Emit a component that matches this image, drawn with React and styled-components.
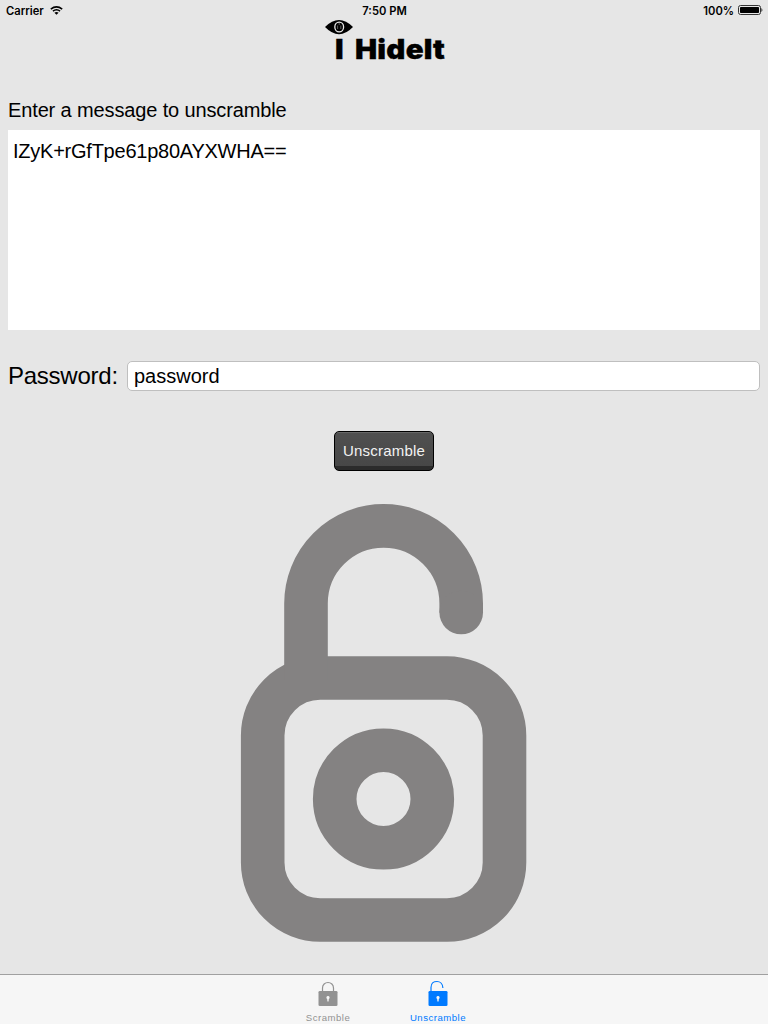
import React from "react";
import styled, { createGlobalStyle } from "styled-components";

const GlobalStyle = createGlobalStyle`
  * { box-sizing: border-box; }
  body { margin: 0; background: #e6e6e6; }
`;

const Screen = styled.div`
  width: 768px;
  height: 1024px;
  display: flex;
  flex-direction: column;
  overflow: hidden;
  background: #e6e6e6;
  color: #000;
  font-family: "Liberation Sans", Arial, sans-serif;
`;

const StatusBar = styled.header`
  display: grid;
  grid-template-columns: 1fr auto 1fr;
  height: 20px;
  padding: 1px 5px 0 6px;
  align-items: center;
  font: 600 11.2px/20px Inter, sans-serif;
`;

const StatusGroup = styled.div`
  display: flex;
  align-items: center;
  gap: ${(p) => p.$gap};
  justify-content: ${(p) => p.$align || "flex-start"};

  svg {
    margin-bottom: 2px;
  }
`;

const Brand = styled.div`
  display: flex;
  flex-direction: column;
  width: 122px;
  height: 44px;
  margin-left: 325px;
`;

const EyeIcon = styled.svg`
  display: block;
  width: 28px;
  height: 15px;
`;

const BrandName = styled.div`
  display: flex;
  gap: 10px;
  margin-left: 10.2px;
  font: 900 26.5px/29px Inter, sans-serif;
  letter-spacing: 0.2px;
  -webkit-text-stroke: 0.3px #000;
  white-space: nowrap;
  transform: scaleX(1.115);
  transform-origin: left;
`;

const Content = styled.main`
  flex: 1;
  display: flex;
  flex-direction: column;
  padding: 35px 8px 0;
`;

const Prompt = styled.label`
  height: 31px;
  font-size: 20px;
  line-height: 22px;
  letter-spacing: -0.13px;
`;

const MessageBox = styled.div`
  height: 200px;
  padding: 10px 5px;
  background: #fff;
  font-size: 20px;
  line-height: 23px;
  letter-spacing: -0.24px;
`;

const PasswordRow = styled.div`
  display: flex;
  align-items: center;
  height: 30px;
  margin-top: 31px;
`;

const PasswordLabel = styled.label`
  width: 119px;
  font-size: 24px;
  letter-spacing: -0.25px;
`;

const PasswordField = styled.div`
  flex: 1;
  height: 30px;
  padding: 0 6px;
  border: 1px solid #bfbfbf;
  border-radius: 5px;
  background: #fff;
  font-size: 20px;
  line-height: 29px;
`;

const ActionButton = styled.button`
  align-self: center;
  width: 100px;
  height: 40px;
  margin-top: 40px;
  padding: 0;
  border: 1px solid #000;
  border-radius: 5px;
  background: linear-gradient(#686868 0 1px, #505050 1px, #474747 34px, #2b2b2b 34px);
  color: #f2f2f2;
  font: 15px/38px "Liberation Sans", Arial, sans-serif;
  letter-spacing: 0.2px;
`;

const LockArt = styled.svg`
  display: block;
  align-self: center;
  width: 288px;
  height: 440px;
  margin-top: 32px;
`;

const TabBar = styled.nav`
  display: flex;
  justify-content: center;
  height: 50px;
  padding-right: 2px;
  border-top: 1px solid #a0a0a0;
  background: #f6f6f6;
`;

const Tab = styled.div`
  display: flex;
  flex-direction: column;
  align-items: center;
  width: 110px;
  padding-top: 5px;
  color: ${(p) => (p.$active ? "#007aff" : "#929292")};
  font-size: 9.6px;
  line-height: 12px;
  letter-spacing: 0.5px;
`;

const TabIcon = styled.svg`
  display: block;
  width: 22px;
  height: 28px;
  margin-bottom: 4px;
`;

const WifiIcon = () => (
  <svg width="13" height="9" viewBox="0 0 13 9" fill="none" stroke="#000">
    <path d="M.8 3.1Q6.5-1.3 12.2 3.1" strokeWidth="1.6" />
    <path d="M2.9 5.2Q6.5 2.5 10.1 5.2" strokeWidth="1.5" />
    <path d="M4.4 6.7Q6.5 5.3 8.6 6.7L6.5 8.8Z" fill="#000" stroke="none" />
  </svg>
);

const BatteryIcon = () => (
  <svg width="25" height="10" viewBox="0 0 25 10">
    <rect x=".5" y=".5" width="22" height="9" rx="2" fill="none" stroke="#333" />
    <rect x="2" y="2" width="19" height="6" rx=".8" />
    <path d="M23.5 3Q25.2 5 23.5 7Z" />
  </svg>
);

const PadlockTabIcon = ({ open }) => (
  <TabIcon viewBox="0 0 22 28">
    <path
      d={open ? "M4 11V7.5C4 3 7 1.5 10 1.5C13 1.5 15.7 3.8 15.9 8" : "M5.5 12V8C5.5 4.8 8 2.5 11 2.5S16.5 4.8 16.5 8V12"}
      fill="none"
      stroke="currentColor"
      strokeWidth="1.2"
    />
    <rect x="1.5" y="11" width="19" height="15" rx="1.3" fill="currentColor" />
    <path d="M11 16A1.6 1.6 0 0 1 11.8 19L11.6 21.4H10.4L10.2 19A1.6 1.6 0 0 1 11 16Z" fill="#f6f6f6" />
  </TabIcon>
);

export default function App() {
  return (
    <>
      <GlobalStyle />
      <Screen>
        <StatusBar>
          <StatusGroup $gap="6px"><span>Carrier</span><WifiIcon /></StatusGroup>
          <StatusGroup>7:50 PM</StatusGroup>
          <StatusGroup $gap="4px" $align="flex-end"><span>100%</span><BatteryIcon /></StatusGroup>
        </StatusBar>
        <Brand>
          <EyeIcon viewBox="0 0 28 15">
            <path d="M0 7Q7 0 14 0T28 7Q21 14.2 14 14.2T0 7Z" />
            <ellipse cx="14.2" cy="7" rx="4.4" ry="4.9" fill="none" stroke="#e6e6e6" strokeWidth="1.3" />
            <path d="M12.6 5.5V9M15.8 5.5V9M14.2 3V5" fill="none" stroke="#999" strokeWidth=".6" />
          </EyeIcon>
          <BrandName><span>I</span><span>HideIt</span></BrandName>
        </Brand>
        <Content>
          <Prompt>Enter a message to unscramble</Prompt>
          <MessageBox>IZyK+rGfTpe61p80AYXWHA==</MessageBox>
          <PasswordRow>
            <PasswordLabel>Password:</PasswordLabel>
            <PasswordField>password</PasswordField>
          </PasswordRow>
          <ActionButton>Unscramble</ActionButton>
          <LockArt viewBox="240 503 288 440" fill="none" stroke="#848282" strokeWidth="43.6">
            <rect x="262.7" y="678" width="241.8" height="242" rx="57.5" />
            <circle cx="383.5" cy="799" r="48.8" />
            <path d="M306 680V603.5A77.6 77.6 0 0 1 461.2 603.5V612.5" />
            <circle cx="461.2" cy="612.5" r="21.8" fill="#848282" stroke="none" />
          </LockArt>
        </Content>
        <TabBar>
          <Tab><PadlockTabIcon />Scramble</Tab>
          <Tab $active><PadlockTabIcon open />Unscramble</Tab>
        </TabBar>
      </Screen>
    </>
  );
}
